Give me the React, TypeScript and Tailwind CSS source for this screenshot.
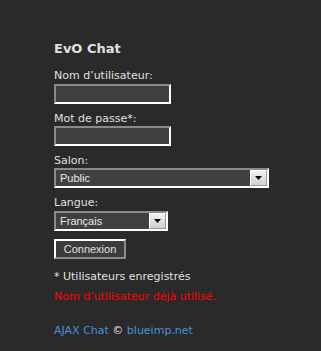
import React from 'react';

const labelCls = 'text-[11px] leading-[14px] text-[#e0e0e0]';
const fieldBorder = 'border-2 border-t-[#8a8a8a] border-l-[#8a8a8a] border-r-white border-b-white bg-[#404040]';

function DropArrow() {
  return (
    <div className="flex h-full w-[17px] items-center justify-center border border-t-white border-l-white border-r-[#9a9a9a] border-b-[#9a9a9a] bg-gradient-to-b from-[#f2f2f2] to-[#cfcfcf]">
      <svg width="7" height="4" viewBox="0 0 7 4">
        <path d="M0 0h7L3.5 4z" fill="#000" />
      </svg>
    </div>
  );
}

function FakeSelect({ value, width }: { value: string; width: string }) {
  return (
    <div className={`flex h-[20px] ${width} items-stretch ${fieldBorder}`}>
      <div className="flex flex-1 items-center pl-[4px] font-['Liberation_Sans',Arial,sans-serif] text-[11px] text-[#e8e8e8]">
        {value}
      </div>
      <DropArrow />
    </div>
  );
}

export default function App() {
  return (
    <div className="h-[351px] w-full bg-[#2a2a2a] pl-[54px] pt-[41px] font-['DejaVu_Sans',Verdana,sans-serif]">
      <h1 className="text-[13px] font-bold leading-[16px] text-[#e0e0e0]">EvO Chat</h1>

      <div className="mt-[12px] flex flex-col items-start">
        <label className={labelCls}>Nom d’utilisateur:</label>
        <input
          type="text"
          className={`mt-[1px] h-[20px] w-[117px] outline-none ${fieldBorder}`}
        />

        <label className={`mt-[8px] ${labelCls}`}>Mot de passe*:</label>
        <input
          type="password"
          className={`h-[20px] w-[117px] outline-none ${fieldBorder}`}
        />

        <label className={`mt-[8px] ${labelCls}`}>Salon:</label>
        <FakeSelect value="Public" width="w-[215px]" />

        <label className={`mt-[8px] ${labelCls}`}>Langue:</label>
        <div className="mt-[1px]">
          <FakeSelect value="Français" width="w-[114px]" />
        </div>

        <button className="mt-[8px] h-[20px] w-[72px] border-2 border-t-white border-l-white border-r-[#8a8a8a] border-b-[#8a8a8a] bg-[#3c3c3c] font-['Liberation_Sans',Arial,sans-serif] text-[11px] text-[#e0e0e0]">
          Connexion
        </button>

        <p className={`mt-[11px] ${labelCls}`}>* Utilisateurs enregistrés</p>
        <p className="mt-[6px] text-[11px] leading-[14px] text-[#ff0000]">Nom d’utilisateur déjà utilisé.</p>

        <p className="mt-[20px] text-[11px] leading-[14px] text-[#e0e0e0]">
          <span className="text-[#4a8fd8]">AJAX Chat</span> © <span className="text-[#4a8fd8]">blueimp.net</span>
        </p>
      </div>
    </div>
  );
}
